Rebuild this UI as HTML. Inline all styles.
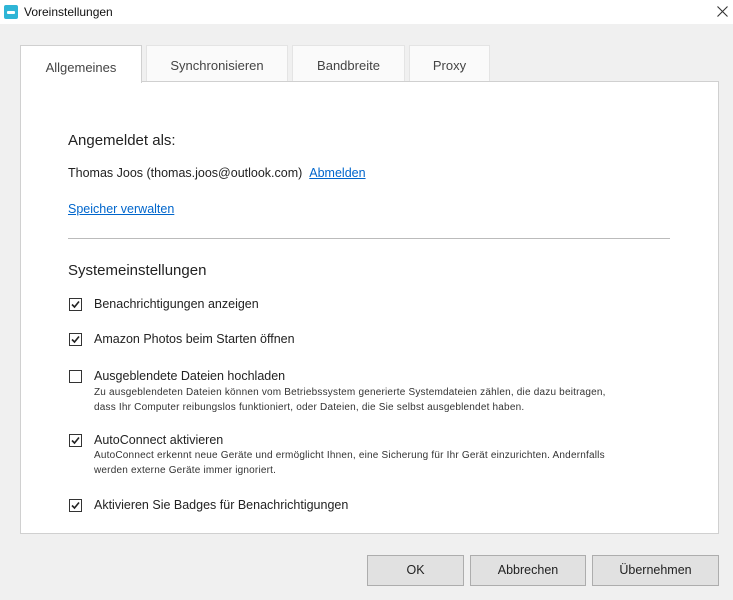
<!DOCTYPE html>
<html><head><meta charset="utf-8"><style>
body{margin:0;width:733px;height:600px;background:#f0f0f0;font-family:"Liberation Sans",Arial,sans-serif;color:#222;position:relative;overflow:hidden}
.abs{position:absolute;white-space:nowrap}
.title{position:absolute;left:0;top:0;width:733px;height:24px;background:#fff}
.tab{position:absolute;top:45px;height:36px;background:#fafafa;border:1px solid #e4e4e4;border-bottom:none;font-size:13px;color:#444;text-align:center;line-height:40px;box-sizing:border-box}
.panel{position:absolute;left:20px;top:81px;width:699px;height:453px;background:#fff;border:1px solid #d0d0d0;box-sizing:border-box}
.cb{position:absolute;left:69px;width:13px;height:13px;border:1px solid #333;box-sizing:border-box;background:#fff}
.cb svg{position:absolute;left:0;top:0}
.lbl{position:absolute;left:94px;font-size:12.5px;white-space:nowrap;color:#222}
.small{position:absolute;left:94px;font-family:"Liberation Sans",Arial,sans-serif;font-size:10px;letter-spacing:0.2px;line-height:15px;color:#333;white-space:nowrap}
.btn{position:absolute;top:555px;height:31px;background:#e1e1e1;border:1px solid #adadad;box-sizing:border-box;font-size:12.5px;text-align:center;line-height:29px;color:#222}
a{color:#0066cc;text-decoration:underline}
</style></head><body>
<div class="title"></div>
<div class="abs" style="left:4px;top:5px;width:14px;height:14px;background:#2fb5d6;border-radius:2px"></div>
<div class="abs" style="left:7px;top:11px;width:8px;height:3px;background:#fff;border-radius:1px"></div>
<div class="abs" style="left:24px;top:5px;font-size:12px;color:#111">Voreinstellungen</div>
<svg class="abs" style="left:717px;top:6px" width="11" height="11"><path d="M0.5 0.5L10.5 10.5M10.5 0.5L0.5 10.5" stroke="#333" stroke-width="1.1"/></svg>
<div class="tab" style="left:146px;width:142px">Synchronisieren</div>
<div class="tab" style="left:292px;width:113px">Bandbreite</div>
<div class="tab" style="left:409px;width:81px">Proxy</div>
<div class="panel"></div>
<div class="tab" style="left:20px;width:122px;height:38px;background:#fff;border-color:#d0d0d0;top:45px;line-height:44px">Allgemeines</div>
<div class="abs" style="left:68px;top:132px;font-size:15px;color:#222">Angemeldet als:</div>
<div class="abs" style="left:68px;top:166px;font-size:12.5px">Thomas Joos (thomas.joos@outlook.com) &nbsp;<a>Abmelden</a></div>
<div class="abs" style="left:68px;top:202px;font-size:12.5px"><a>Speicher verwalten</a></div>
<div class="abs" style="left:68px;top:238px;width:602px;height:1px;background:#bbb"></div>
<div class="abs" style="left:68px;top:262px;font-size:15px">Systemeinstellungen</div>
<div class="cb" style="top:298px"><svg width="11" height="11"><path d="M2 5.5L4.5 8L9 2.5" stroke="#222" stroke-width="1.6" fill="none"/></svg></div>
<div class="lbl" style="top:297px">Benachrichtigungen anzeigen</div>
<div class="cb" style="top:333px"><svg width="11" height="11"><path d="M2 5.5L4.5 8L9 2.5" stroke="#222" stroke-width="1.6" fill="none"/></svg></div>
<div class="lbl" style="top:332px">Amazon Photos beim Starten öffnen</div>
<div class="cb" style="top:370px"></div>
<div class="lbl" style="top:369px">Ausgeblendete Dateien hochladen</div>
<div class="small" style="top:385px">Zu ausgeblendeten Dateien können vom Betriebssystem generierte Systemdateien zählen, die dazu beitragen,<br>dass Ihr Computer reibungslos funktioniert, oder Dateien, die Sie selbst ausgeblendet haben.</div>
<div class="cb" style="top:434px"><svg width="11" height="11"><path d="M2 5.5L4.5 8L9 2.5" stroke="#222" stroke-width="1.6" fill="none"/></svg></div>
<div class="lbl" style="top:433px">AutoConnect aktivieren</div>
<div class="small" style="top:448px">AutoConnect erkennt neue Geräte und ermöglicht Ihnen, eine Sicherung für Ihr Gerät einzurichten. Andernfalls<br>werden externe Geräte immer ignoriert.</div>
<div class="cb" style="top:499px"><svg width="11" height="11"><path d="M2 5.5L4.5 8L9 2.5" stroke="#222" stroke-width="1.6" fill="none"/></svg></div>
<div class="lbl" style="top:498px">Aktivieren Sie Badges für Benachrichtigungen</div>
<div class="btn" style="left:367px;width:97px">OK</div>
<div class="btn" style="left:470px;width:116px">Abbrechen</div>
<div class="btn" style="left:592px;width:127px">Übernehmen</div>
</body></html>
